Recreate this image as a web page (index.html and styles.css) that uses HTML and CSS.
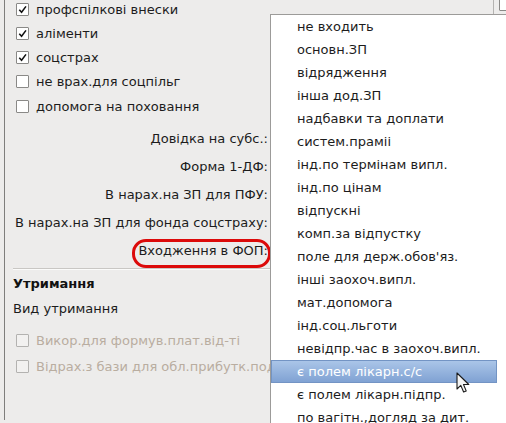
FILE: index.html
```html
<!DOCTYPE html>
<html lang="uk">
<head>
<meta charset="utf-8">
<title>Утримання</title>
<link rel="stylesheet" href="styles.css">
</head>
<body>
<div class="panel">
  <div class="checks">
    <div class="row"><span class="cb"><svg viewBox="0 0 12 12"><path d="M2.5 6.2 L5 9 L9.8 2.6"/></svg></span>профспілкові внески</div>
    <div class="row"><span class="cb"><svg viewBox="0 0 12 12"><path d="M2.5 6.2 L5 9 L9.8 2.6"/></svg></span>аліменти</div>
    <div class="row"><span class="cb"><svg viewBox="0 0 12 12"><path d="M2.5 6.2 L5 9 L9.8 2.6"/></svg></span>соцстрах</div>
    <div class="row tall"><span class="cb"></span>не врах.для соцпільг</div>
    <div class="row tall"><span class="cb"></span>допомога на поховання</div>
  </div>
  <div class="labels">
    <div class="label">Довідка на субс.:</div>
    <div class="label">Форма 1-ДФ:</div>
    <div class="label">В нарах.на ЗП для ПФУ:</div>
    <div class="label">В нарах.на ЗП для фонда соцстраху:</div>
    <div class="label marked">Входження в ФОП:</div>
  </div>
  <div class="sep"></div>
  <div class="heading">Утримання</div>
  <div class="kind">Вид утримання</div>
  <div class="disabled">
    <div class="row dis"><span class="cb off"></span>Викор.для формув.плат.від-ті</div>
    <div class="row dis"><span class="cb off"></span>Відрах.з бази для обл.прибутк.податку</div>
  </div>
</div>

<div class="back-line"></div>
<span class="cb back-cb"></span>

<div class="dropdown">
  <div class="item">не входить</div>
  <div class="item">основн.ЗП</div>
  <div class="item">відрядження</div>
  <div class="item">інша дод.ЗП</div>
  <div class="item">надбавки та доплати</div>
  <div class="item">систем.праміі</div>
  <div class="item">інд.по термінам випл.</div>
  <div class="item">інд.по цінам</div>
  <div class="item">відпускні</div>
  <div class="item">комп.за відпустку</div>
  <div class="item">поле для держ.обов'яз.</div>
  <div class="item">інші заохоч.випл.</div>
  <div class="item">мат.допомога</div>
  <div class="item">інд.соц.льготи</div>
  <div class="item">невідпр.час в заохоч.випл.</div>
  <div class="item active">є полем лікарн.с/с</div>
  <div class="item">є полем лікарн.підпр.</div>
  <div class="item">по вагітн.,догляд за дит.</div>
</div>

<svg class="cursor" width="15" height="22" viewBox="0 0 15 22">
  <path d="M1 1 L1 17 L4.8 13.4 L7.6 20 L10.2 18.9 L7.5 12.5 L12.8 12.5 Z" fill="#f4f4f4" stroke="#1a1a1a" stroke-width="1.1" stroke-linejoin="round"/>
</svg>
</body>
</html>
```

FILE: styles.css
```css
html, body {
  margin: 0;
  padding: 0;
}
body {
  width: 506px;
  height: 423px;
  overflow: hidden;
  position: relative;
  background: #edeceb;
  font-family: "DejaVu Sans", Verdana, sans-serif;
  font-size: 13px;
  color: #1c1c1c;
}
.panel {
  margin-left: 4px;
  border-left: 1px solid #7f7e7c;
  height: 423px;
  box-sizing: border-box;
}
.checks {
  margin-top: -3px;
}
.row {
  display: flex;
  align-items: center;
  height: 24px;
  padding-left: 11px;
  white-space: nowrap;
}
.row.tall {
  height: 25px;
}
.cb {
  display: inline-block;
  width: 11px;
  height: 11px;
  border: 1px solid #8a8987;
  background: #ffffff;
  margin-right: 7px;
  flex: none;
  border-radius: 1px;
}
.cb svg {
  display: block;
  width: 11px;
  height: 11px;
}
.cb path {
  fill: none;
  stroke: #111;
  stroke-width: 1.7;
}
.labels {
  margin-top: 6px;
  width: 263px;
}
.label {
  height: 28px;
  line-height: 28px;
  text-align: right;
  white-space: nowrap;
}
.marked {
  position: relative;
}
.marked::after {
  content: "";
  position: absolute;
  left: 127px;
  top: 2px;
  width: 133px;
  height: 23px;
  border: 3px solid #dc0a0a;
  border-radius: 14px;
}
.sep {
  margin-top: 3px;
  margin-left: 8px;
  width: 258px;
  height: 1px;
  background: #c9c7c4;
  border-bottom: 1px solid #fbfbfa;
}
.heading {
  margin-top: 2px;
  padding-left: 8px;
  height: 24px;
  line-height: 24px;
  font-weight: bold;
  color: #111;
}
.kind {
  padding-left: 8px;
  height: 26px;
  line-height: 26px;
}
.disabled {
  margin-top: 5px;
}
.row.dis {
  height: 26px;
  color: #b9ada0;
}
.cb.off {
  border-color: #b3b2b0;
  background: #f2f1f0;
}
.back-line {
  position: absolute;
  left: 493px;
  top: 0;
  width: 1px;
  height: 14px;
  background: #b4b3b1;
}
.back-cb {
  position: absolute;
  left: 499px;
  top: -2px;
  margin: 0;
}
.dropdown {
  position: absolute;
  left: 270px;
  top: 14px;
  width: 240px;
  height: 420px;
  background: #ffffff;
  border-left: 1px solid #9c9b99;
  border-top: 1px solid #9c9b99;
  overflow: hidden;
}
.item {
  width: 226px;
  height: 23px;
  line-height: 23px;
  padding-left: 26px;
  box-sizing: border-box;
  white-space: nowrap;
  color: #1c1c1c;
}
.item.active {
  color: #ffffff;
  background: linear-gradient(#aac5e8, #80a2d3);
  border: 1px solid #7394c4;
  line-height: 21px;
  padding-left: 25px;
}
.cursor {
  position: absolute;
  left: 456px;
  top: 372px;
}
```
